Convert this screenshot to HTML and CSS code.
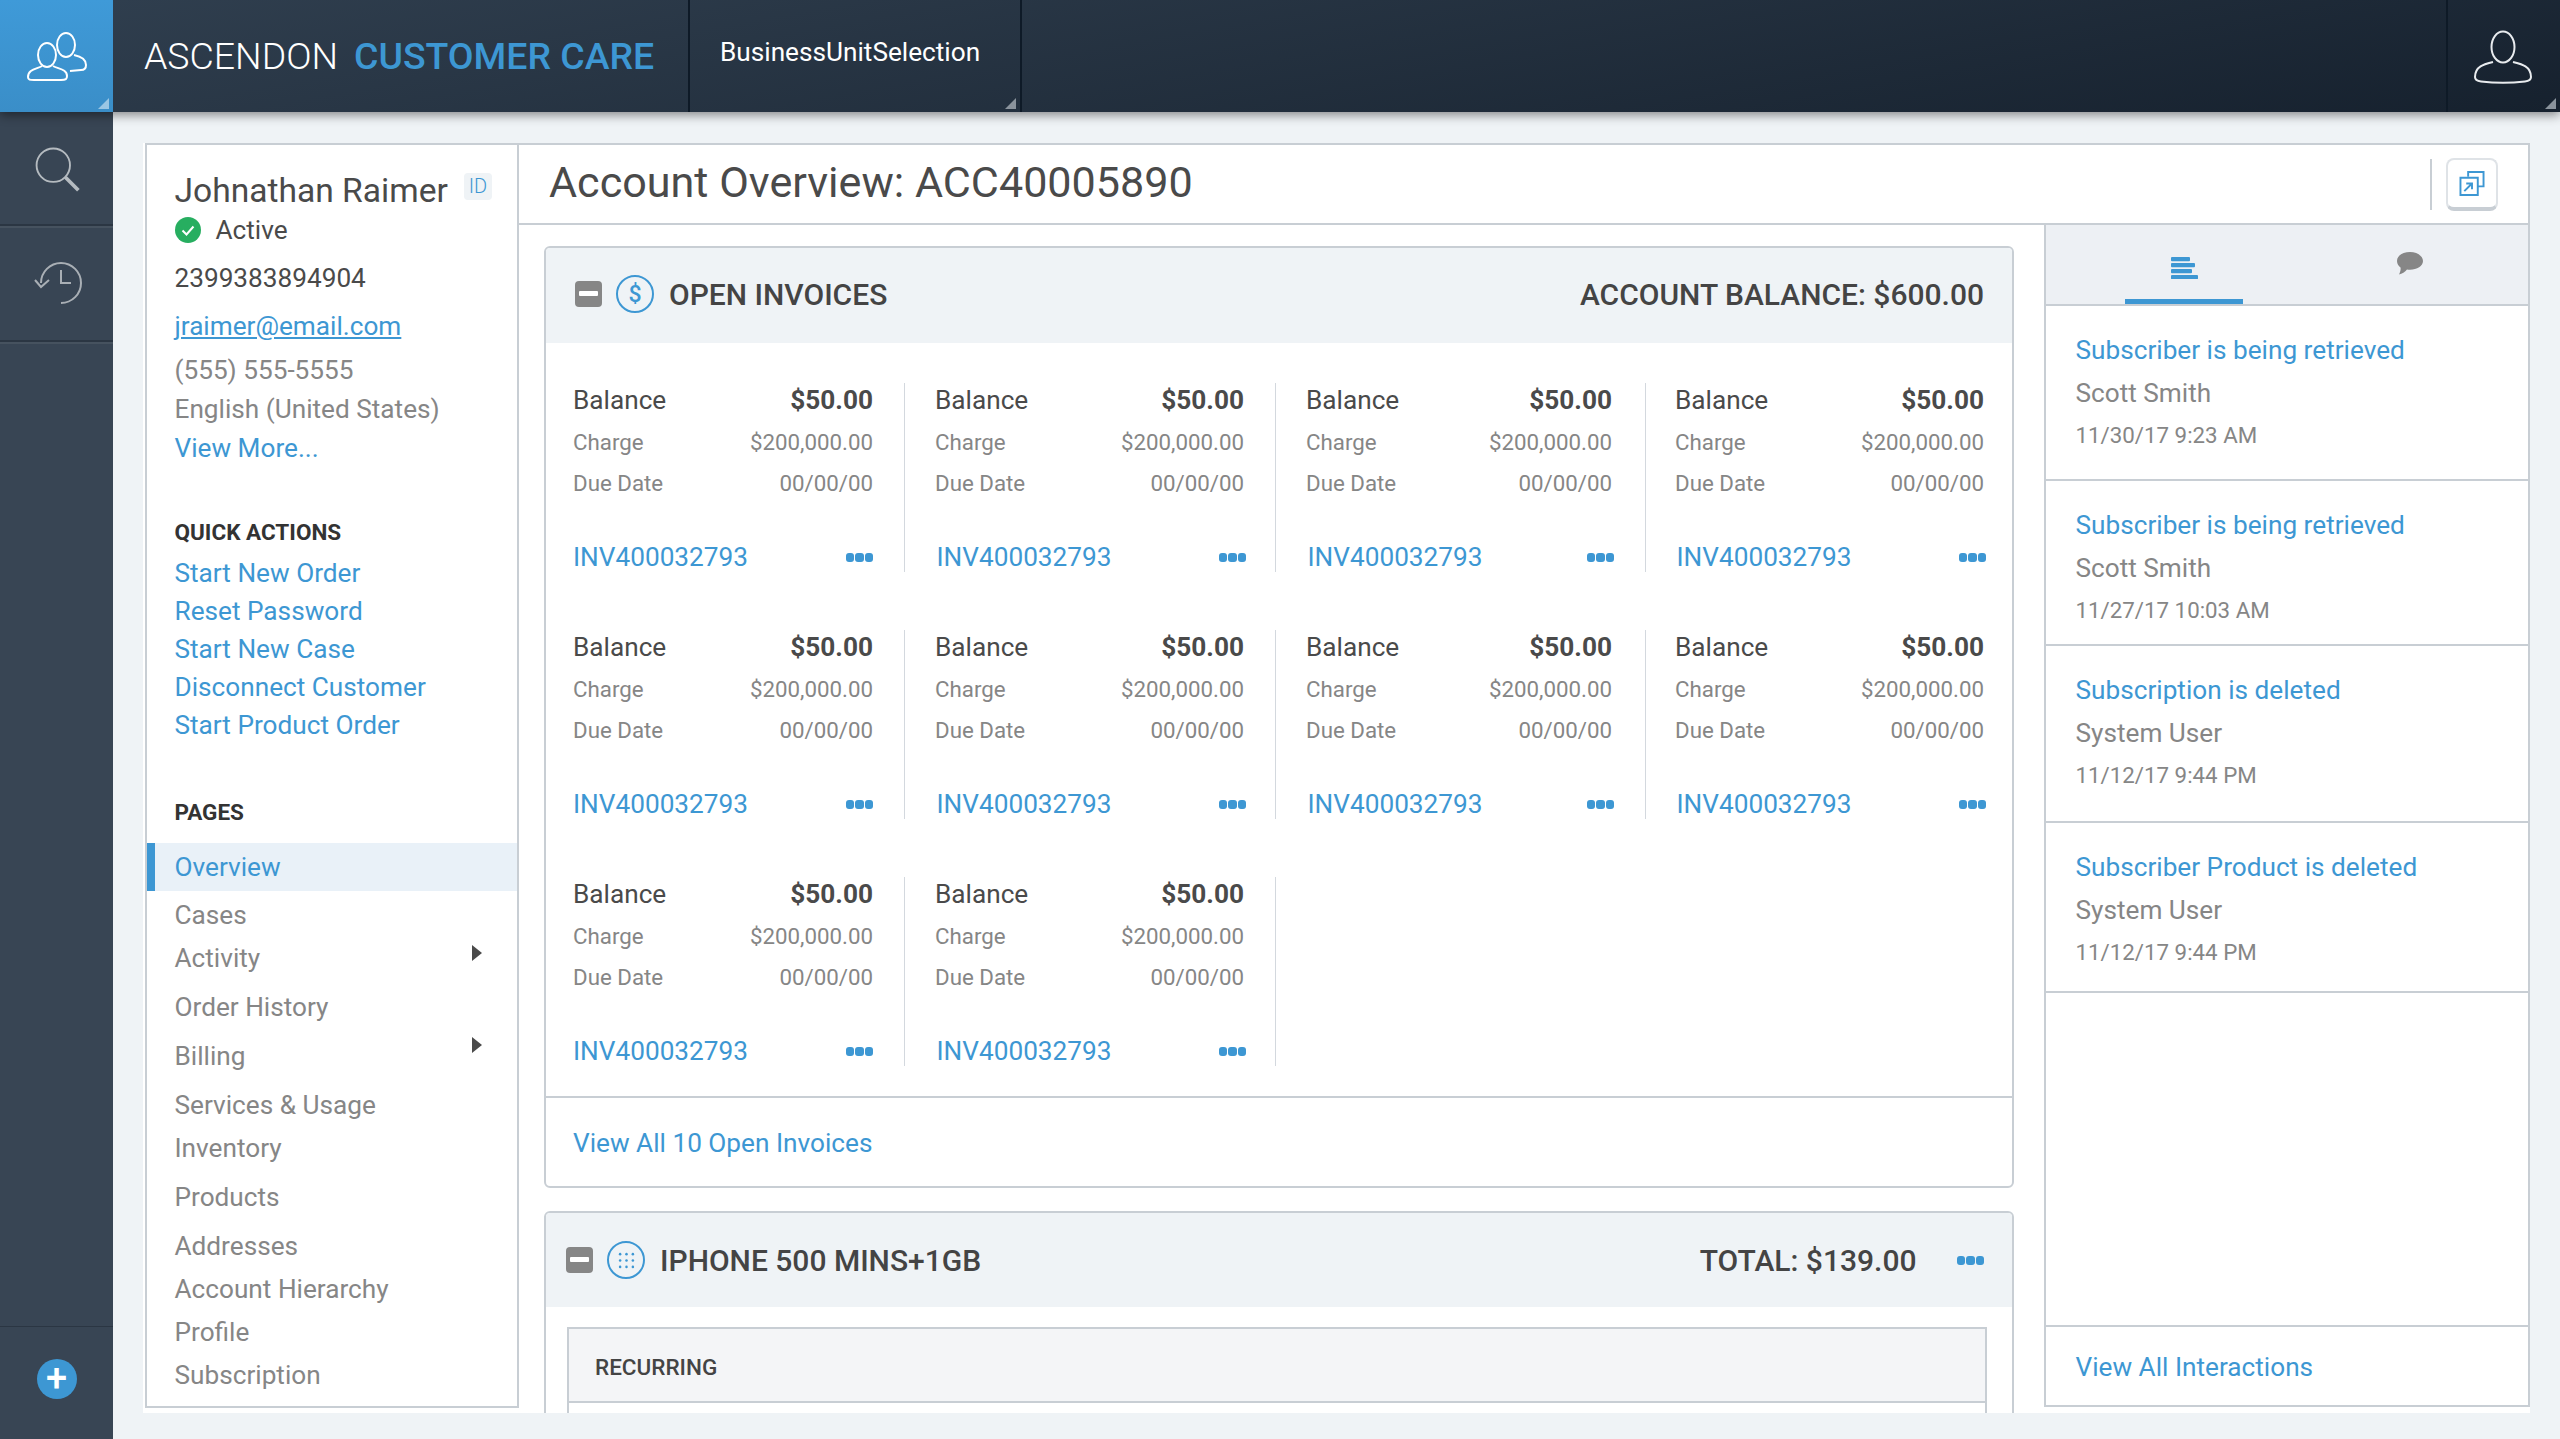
FILE: index.html
```html
<!DOCTYPE html>
<html lang="en">
<head>
<meta charset="utf-8">
<title>Ascendon Customer Care</title>
<link rel="stylesheet" href="styles.css">
</head>
<body>
<header class="topbar">
  <div class="tile">
    <svg class="ico-people" viewBox="26 30 60 54" fill="none" stroke="#fff" stroke-width="2"><ellipse cx="46" cy="55" rx="9" ry="12"/><path d="M41 66C36 69 27 69 27 77c0 3 2 3 6 3h27c5 0 6-1 6-4 0-7-9-7-14-10"/><ellipse cx="65" cy="45" rx="9" ry="12"/><path d="M73 55c5 1 12 3 12 10 0 4-2 5-5 5l-11 1"/></svg>
    <span class="corner"></span>
  </div>
  <div class="brand"><span class="brand-a">ASCENDON</span><span class="brand-b">CUSTOMER CARE</span></div>
  <div class="unit">BusinessUnitSelection<span class="corner"></span></div>
  <div class="user">
    <svg class="ico-user" viewBox="50 25 70 65" fill="none" stroke="#e8ebee" stroke-width="2"><ellipse cx="84" cy="47" rx="11.500" ry="15.500"/><path d="M74 62c-8 2-18 4-18 15 0 3 2 4 6 4.500 13 1.500 31 1.500 44 0 4-.5 6-1.500 6-4.500 0-11-10-13-18-15"/></svg>
    <span class="corner"></span>
  </div>
</header>

<div class="shell">
  <nav class="rail">
    <div class="rail-btn"><svg class="ico-rail" viewBox="30 140 52 56" fill="none" stroke="#b5bbc0" stroke-width="2"><circle cx="52" cy="165" r="18"/><path d="M65 178l14 14" stroke-width="4"/></svg></div>
    <div class="rail-btn"><svg class="ico-rail" viewBox="30 258 52 52" fill="none" stroke="#a9afb5" stroke-width="2"><path d="M40 283a20 20 0 1 1 20 20"/><path d="M34 280l6 7 8-7"/><path d="M60 270v13h10"/></svg></div>
    <div class="rail-add"><span class="plus">+</span></div>
  </nav>

  <main class="sheet">
    <aside class="side">
      <div class="person"><span class="person-name">Johnathan Raimer</span><span class="id-badge">ID</span></div>
      <div class="status"><svg class="ico-ok" viewBox="0 0 26 26"><circle cx="13" cy="13" r="13" fill="#27ae60"/><path d="M7.500 13.500l4 4 7-8" fill="none" stroke="#fff" stroke-width="2"/></svg>Active</div>
      <div class="info num">2399383894904</div>
      <a class="info mail">jraimer@email.com</a>
      <div class="info phone">(555) 555-5555</div>
      <div class="info lang">English (United States)</div>
      <a class="info more">View More...</a>
      <h4 class="side-h qa">QUICK ACTIONS</h4>
      <ul class="qa-list">
        <li>Start New Order</li>
        <li>Reset Password</li>
        <li>Start New Case</li>
        <li>Disconnect Customer</li>
        <li>Start Product Order</li>
      </ul>
      <h4 class="side-h pg">PAGES</h4>
      <ul class="pages">
        <li class="page current">Overview</li>
        <li class="page gap">Cases</li>
        <li class="page sub sub-a">Activity</li>
        <li class="page gap">Order History</li>
        <li class="page gap sub sub-b">Billing</li>
        <li class="page gap">Services &amp; Usage</li>
        <li class="page">Inventory</li>
        <li class="page gap">Products</li>
        <li class="page gap">Addresses</li>
        <li class="page">Account Hierarchy</li>
        <li class="page">Profile</li>
        <li class="page">Subscription</li>
        <li class="page">Households</li>
      </ul>
    </aside>

    <section class="center">
      <div class="titlebar">
        <h1 class="title">Account Overview: ACC40005890</h1>
        <div class="title-tools">
          <button class="pop"><svg viewBox="0 0 26 26" fill="none" stroke="#3d97d3" stroke-width="2"><path d="M9 6V1h16v15h-6"/><path d="M1 7h18v18H1z"/><path d="M5 21l8-8M7 13h6v6"/></svg></button>
        </div>
      </div>
      <div class="body">
        <div class="workspace">
          <section class="card">
            <div class="card-head">
              <span class="toggle"></span>
              <span class="ring"><span class="dollar">$</span></span>
              <h2 class="card-title">OPEN INVOICES</h2>
              <span class="card-total">ACCOUNT BALANCE: $600.00</span>
            </div>
            <div class="invoices" id="invoices"></div>
            <div class="card-foot"><a>View All 10 Open Invoices</a></div>
          </section>
          <section class="card second">
            <div class="card-head narrow">
              <span class="toggle"></span>
              <span class="ring"><svg viewBox="0 0 16 16" class="dots-grid" fill="#3d97d3"><circle cx="2" cy="2" r="1.200"/><circle cx="8" cy="2" r="1.200"/><circle cx="14" cy="2" r="1.200"/><circle cx="2" cy="8" r="1.200"/><circle cx="8" cy="8" r="1.200"/><circle cx="14" cy="8" r="1.200"/><circle cx="2" cy="14" r="1.200"/><circle cx="8" cy="14" r="1.200"/><circle cx="14" cy="14" r="1.200"/></svg></span>
              <h2 class="card-title">IPHONE 500 MINS+1GB</h2>
              <span class="card-total">TOTAL: $139.00</span>
              <span class="dots head-dots"><i></i><i></i><i></i></span>
            </div>
            <div class="sub-box">
              <div class="sub-head">RECURRING</div>
            </div>
          </section>
        </div>
        <aside class="feed">
          <div class="tabs">
            <div class="tab active"><svg viewBox="0 0 27 22" class="ico-list" fill="#3d97d3"><rect width="19" height="4.200" rx="1"/><rect y="6" width="24" height="4.200" rx="1"/><rect y="12" width="21" height="4.200" rx="1"/><rect y="18" width="27" height="4.200" rx="1"/></svg></div>
            <div class="tab chat"><svg viewBox="0 0 26 23" class="ico-chat" fill="#868686"><path d="M13 0C6 0 0 3.500 0 9c0 3 1.500 5 3.500 6.500.5 2-.5 5-1.500 7 3-.5 6-2.500 8-5 1 .2 2 .2 3 .2 7 0 13-3.700 13-8.700S20 0 13 0z"/></svg></div>
          </div>
          <div class="entry h1"><a>Subscriber is being retrieved</a><p class="who">Scott Smith</p><p class="when">11/30/17 9:23 AM</p></div>
          <div class="entry h2"><a>Subscriber is being retrieved</a><p class="who">Scott Smith</p><p class="when">11/27/17 10:03 AM</p></div>
          <div class="entry h3"><a>Subscription is deleted</a><p class="who">System User</p><p class="when">11/12/17 9:44 PM</p></div>
          <div class="entry h4"><a>Subscriber Product is deleted</a><p class="who">System User</p><p class="when">11/12/17 9:44 PM</p></div>
          <div class="feed-foot"><a>View All Interactions</a></div>
        </aside>
      </div>
    </section>
  </main>
</div>
<script src="app.js"></script>
</body>
</html>
```

FILE: app.js
```js
var host = document.getElementById('invoices');
var html = '';
for (var i = 0; i < 10; i++) {
  html += '<article class="inv inv-c' + (i % 4) + '">' +
    '<div class="inv-row main"><span>Balance</span><b>$50.00</b></div>' +
    '<div class="inv-row charge"><span>Charge</span><span>$200,000.00</span></div>' +
    '<div class="inv-row"><span>Due Date</span><span>00/00/00</span></div>' +
    '<div class="inv-row link"><a>INV400032793</a><span class="dots"><i></i><i></i><i></i></span></div>' +
    '</article>';
}
host.innerHTML = html;
```

FILE: styles.css
```css
* { box-sizing: border-box; }
html, body { margin: 0; height: 100%; overflow: hidden; }
body { background: #eff3f6; font-family: Roboto, "Liberation Sans", sans-serif; font-size: 26.200px; color: #4a4a4a; display: flex; flex-direction: column; height: 1439px; }
a { color: #3d97d3; }
h1, h2, h4, p, ul { margin: 0; padding: 0; list-style: none; font-weight: normal; }

.topbar { height: 112px; flex: none; display: flex; background: linear-gradient(170deg, #303f4f 0%, #16212e 100%); box-shadow: 0 3px 10px rgba(0,0,0,.45); position: relative; z-index: 2; }
.corner { position: absolute; right: 4px; bottom: 3px; width: 0; height: 0; border-style: solid; border-width: 0 0 11px 11px; border-color: transparent transparent #8a939c transparent; }
.tile { position: relative; width: 113px; background: linear-gradient(#3f9ad8, #3a8ec8); display: flex; align-items: center; justify-content: center; }
.tile .corner { border-bottom-color: #9ac6e4; }
.ico-people { width: 60px; height: 54px; margin-top: 1px; }
.brand { width: 577px; display: flex; align-items: center; padding: 0 0 0 31px; font-size: 37.400px; border-right: 2px solid #0e1a27; }
.brand-a { color: #fff; font-weight: 300; }
.brand-b { color: #3d97d3; font-weight: 500; margin-left: 16px; }
.unit { position: relative; width: 332px; padding: 37px 0 0 30px; color: #fff; font-size: 26.200px; border-right: 2px solid #0e1a27; }
.user { position: relative; margin-left: auto; width: 114px; border-left: 2px solid #0e1a27; display: flex; align-items: center; justify-content: center; }
.ico-user { width: 70px; height: 65px; margin-top: 3px; }

.shell { flex: 1; display: flex; min-height: 0; }
.rail { width: 113px; flex: none; background: #384554; display: flex; flex-direction: column; }
.rail-btn { height: 114px; display: flex; align-items: center; justify-content: center; border-bottom: 2px solid #2b3643; box-shadow: 0 2px 0 #46525f; }
.rail-btn + .rail-btn { margin-top: 2px; }
.ico-rail { width: 52px; height: 52px; }
.rail-add { margin-top: auto; height: 113px; border-top: 1px solid #2b3643; display: flex; justify-content: center; padding-top: 32px; }
.plus { width: 40px; height: 40px; border-radius: 50%; background: #3d97d3; color: #fff; font-size: 38px; font-weight: 500; line-height: 38px; text-align: center; }

.sheet { flex: none; width: 2387px; height: 1270px; margin: 31px 0 0 30px; background: #fff; display: flex; padding-left: 2px; }
.side { width: 374px; height: 1265px; flex: none; border: 2px solid #c8ced4; overflow: hidden; padding-top: 24px; }
.person { display: flex; align-items: flex-start; padding-left: 27.500px; height: 43px; }
.person-name { font-size: 33.600px; line-height: 44px; }
.id-badge { margin: 4px 0 0 16px; width: 28px; height: 27px; border-radius: 4px; background: #eff3f6; color: #3d97d3; font-size: 20px; font-weight: 300; line-height: 27px; text-align: center; }
.status { display: flex; align-items: center; height: 36px; padding-left: 27.500px; }
.ico-ok { width: 26px; height: 26px; margin-right: 15px; }
.info { display: block; padding-left: 27.500px; line-height: 40px; height: 40px; }
.num { margin-top: 10px; }
.mail { margin-top: 8px; text-decoration: underline; }
.phone { color: #868686; margin-top: 4px; }
.lang { color: #868686; margin-top: -1px; }
.more { color: #3d97d3; margin-top: -1px; }
.side-h { font-size: 22.500px; font-weight: 700; color: #333; padding-left: 27.500px; line-height: 28px; }
.qa { margin-top: 50px; }
.qa-list { margin-top: 8px; padding-left: 27.500px; color: #3d97d3; }
.qa-list li { height: 38px; line-height: 38px; }
.pg { margin-top: 54px; }
.pages { margin-top: 17px; }
.page { height: 43px; line-height: 43px; padding-left: 27.500px; color: #868686; position: relative; }
.page.gap { margin-top: 6px; }
.page.current { height: 48px; line-height: 48px; background: #e9f1f8; color: #3d97d3; border-left: 8px solid #3d97d3; padding-left: 19.500px; margin-bottom: -3px; }
.page.sub::after { content: ""; position: absolute; right: 35px; border-style: solid; border-width: 8px 0 8px 10px; border-color: transparent transparent transparent #4a4a4a; }
.sub-a::after { top: 8px; }
.sub-b::after { top: 2px; }

.center { flex: 1; min-width: 0; display: flex; flex-direction: column; border-top: 2px solid #c8ced4; }
.titlebar { height: 80px; flex: none; display: flex; align-items: center; padding: 0 30px 0 30px; border-bottom: 2px solid #c8ced4; border-right: 2px solid #c8ced4; }
.title { font-size: 43.100px; line-height: 1; margin-bottom: 2px; }
.title-tools { margin-left: auto; display: flex; align-items: center; border-left: 2px solid #c8ced4; padding-left: 14px; height: 51px; }
.pop { width: 52px; height: 53px; padding: 11px; background: #fff; border: 2px solid #dfe3e7; border-bottom: 4px solid #c8ced4; border-radius: 8px; }
.pop svg { display: block; width: 100%; height: 100%; }

.body { flex: 1; min-height: 0; display: flex; overflow: hidden; }
.workspace { flex: none; width: 1525px; padding: 21px 0 0 25px; overflow: hidden; }
.card { width: 1470px; border: 2px solid #c8ced4; border-radius: 6px; background: #fff; overflow: hidden; }
.second { margin-top: 23px; }
.card-head { height: 95px; background: #eff3f6; display: flex; align-items: center; padding: 0 28px 3px 29px; }
.card-head.narrow { padding: 0 28px 0 20px; height: 94px; }
.toggle { width: 27px; height: 26px; border-radius: 4px; background: #868686; position: relative; flex: none; }
.toggle::after { content: ""; position: absolute; left: 4px; right: 4px; top: 10px; height: 5px; background: #fff; border-radius: 1px; }
.ring { width: 38px; height: 38px; border: 2.500px solid #3d97d3; border-radius: 50%; margin-left: 14px; display: flex; align-items: center; justify-content: center; color: #3d97d3; font-size: 23px; font-weight: 500; flex: none; }
.dollar { line-height: 1; }
.dots-grid { width: 17px; height: 17px; }
.card-title { font-size: 30px; font-weight: 500; margin-left: 15px; color: #444; }
.card-total { margin-left: auto; font-size: 30px; font-weight: 500; color: #444; }
.dots { display: inline-flex; gap: 1px; align-items: center; }
.dots i { width: 8.500px; height: 9px; border-radius: 3px; background: #3d97d3; }
.head-dots { margin-left: 40px; }

.invoices { display: grid; grid-template-columns: 359px 371px 370px 366px; grid-auto-rows: 189px; row-gap: 58px; align-content: start; padding-top: 40px; height: 755px; border-bottom: 2px solid #c8ced4; }
.inv-c0 { border-right: 1px solid #d3d8de; padding: 0 31px 0 27px; }
.inv-c1 { border-right: 1px solid #d3d8de; padding: 0 31px 0 30px; }
.inv-c2 { border-right: 1px solid #d3d8de; padding: 0 33px 0 30px; }
.inv-c3 { padding: 0 28px 0 29px; }
.inv-row { display: flex; justify-content: space-between; align-items: center; height: 41px; color: #868686; font-size: 22.300px; }
.inv-row.main { color: #4a4a4a; font-size: 26.200px; height: 33px; }
.inv-row.main b { font-weight: 700; }
.inv-row.charge { margin-top: 5px; }
.inv-row.link { margin-top: 39px; height: 30px; font-size: 26.200px; }
.inv-c1 .link, .inv-c2 .link, .inv-c3 .link { padding-left: 1.500px; margin-right: -2px; }
.card-foot { height: 88px; padding: 27px 0 0 27px; line-height: 36px; }
.sub-box { margin: 20px 25px 0 21px; height: 200px; border: 2px solid #c8ced4; }
.sub-head { height: 74px; line-height: 76px; padding-left: 26px; background: #f4f5f7; border-bottom: 2px solid #c8ced4; font-size: 22.500px; font-weight: 500; color: #444; }

.feed { flex: 1; min-width: 0; border-left: 2px solid #c8ced4; border-right: 2px solid #c8ced4; border-bottom: 2px solid #c8ced4; display: flex; flex-direction: column; margin-bottom: 6px; }
.tabs { height: 81px; flex: none; background: #edf0f4; display: flex; border-bottom: 2px solid #c8ced4; }
.tab { position: relative; width: 118px; margin-left: 79px; display: flex; justify-content: center; padding-top: 32px; }
.tab.chat { margin-left: 154px; width: 26px; padding-top: 27px; }
.tab.active::after { content: ""; position: absolute; left: 0; right: 0; bottom: 0; height: 5px; background: #3d97d3; }
.ico-list { width: 27px; height: 22px; }
.ico-chat { width: 26px; height: 23px; }
.entry { border-bottom: 2px solid #c8ced4; padding: 26px 29.500px 0; }
.entry a { display: block; line-height: 36px; }
.entry .who { color: #868686; line-height: 36px; margin-top: 7px; }
.entry .when { color: #868686; font-size: 22.300px; line-height: 30px; margin-top: 9px; }
.h1 { height: 175px; }
.h2 { height: 165px; }
.h3 { height: 177px; }
.h4 { height: 170px; }
.feed-foot { margin-top: auto; height: 80px; border-top: 2px solid #c8ced4; padding: 22px 29.500px 0; line-height: 36px; }
```
